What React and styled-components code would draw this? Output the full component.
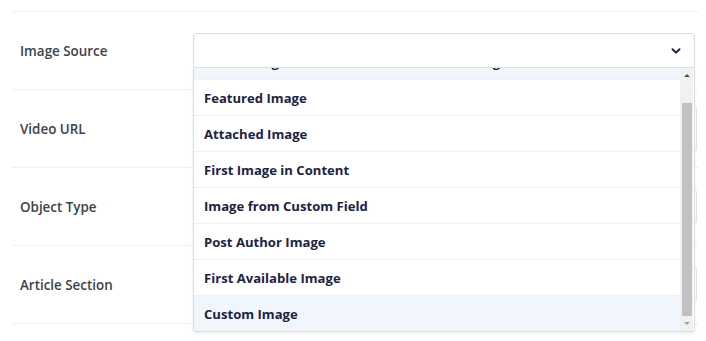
import React from "react";
import styled, { createGlobalStyle } from "styled-components";

const GlobalStyle = createGlobalStyle`
  body {
    margin: 0;
    background: #fff;
    font-family: "Open Sans", "Liberation Sans", sans-serif;
  }
`;

const Page = styled.div`
  padding: 11px 8px 0 12px;
  width: 706px;
  height: 341px;
  box-sizing: border-box;
  overflow: hidden;
`;

const Table = styled.div`
  border-top: 1px solid #f0f0f1;
`;

const Row = styled.div`
  display: grid;
  grid-template-columns: 181px 502px;
  align-items: center;
  height: 77px;
  border-bottom: 1px solid #f0f0f1;
`;

const Label = styled.div`
  padding-left: 8px;
  font-size: 13.4px;
  font-weight: 600;
  color: #3c434a;
`;

const Field = styled.div`
  position: relative;
`;

const Select = styled.div`
  display: flex;
  align-items: center;
  justify-content: flex-end;
  height: 35px;
  box-sizing: border-box;
  padding-right: 13px;
  border: 1px solid #dcdcde;
  border-radius: 3px 3px 0 0;
  background: #fff;

  & svg {
    width: 10px;
    height: 10px;
  }
`;

const Input = styled.div`
  height: ${(p) => p.$h}px;
  margin-right: -2px;
  box-sizing: border-box;
  border: 1px solid #e6e6e8;
  border-radius: 3px;
`;

const Dropdown = styled.div`
  position: absolute;
  top: calc(100% - 1px);
  left: 0;
  right: 0;
  z-index: 5;
  display: flex;
  height: 265px;
  box-sizing: border-box;
  border: 1px solid #dcdcde;
  border-radius: 0 0 3px 3px;
  background: #fff;
  box-shadow: 0 2px 4px rgba(0, 0, 0, 0.06);
  overflow: hidden;
`;

const List = styled.div`
  flex: 1;
  overflow: hidden;
`;

const Items = styled.div`
  margin-top: -24px;
`;

const Item = styled.div`
  display: flex;
  align-items: center;
  height: 35px;
  padding-left: 10px;
  border-bottom: 1px solid #f0f0f1;
  background: ${(p) => (p.$active ? "#f0f6fc" : "#fff")};
  font-size: 13.1px;
  font-weight: 700;
  color: #1d2340;
  white-space: nowrap;

  &:last-child {
    border-bottom: none;
  }
`;

const Scrollbar = styled.div`
  display: flex;
  flex-direction: column;
  align-items: center;
  width: 13px;
  margin-right: 1px;
  background: #f1f1f1;
`;

const Arrow = styled.div`
  display: flex;
  align-items: ${(p) => (p.$down ? "center" : "flex-start")};
  justify-content: center;
  height: ${(p) => p.$h}px;
  padding-top: ${(p) => (p.$down ? 0 : 6)}px;
  box-sizing: border-box;

  &::before {
    content: "";
    border-left: 3px solid transparent;
    border-right: 3px solid transparent;
    ${(p) =>
      p.$down
        ? "border-top: 3px solid #a3a3a3;"
        : "border-bottom: 3px solid #505050;"}
  }
`;

const Thumb = styled.div`
  width: 10px;
  height: 213px;
  background: #c1c1c1;
`;

const options = [
  { text: "Select Image Source — default Featured Image", active: true },
  { text: "Featured Image" },
  { text: "Attached Image" },
  { text: "First Image in Content" },
  { text: "Image from Custom Field" },
  { text: "Post Author Image" },
  { text: "First Available Image" },
  { text: "Custom Image", active: true },
];

function Chevron() {
  return (
    <svg viewBox="0 0 10 10">
      <path
        d="M1.5 3.2 L5 6.6 L8.5 3.2"
        fill="none"
        stroke="#1d2340"
        strokeWidth="2"
        strokeLinecap="round"
        strokeLinejoin="round"
      />
    </svg>
  );
}

export default function App() {
  return (
    <Page>
      <GlobalStyle />
      <Table>
        <Row>
          <Label>Image Source</Label>
          <Field>
            <Select>
              <Chevron />
            </Select>
            <Dropdown>
              <List>
                <Items>
                  {options.map((o) => (
                    <Item key={o.text} $active={o.active}>
                      {o.text}
                    </Item>
                  ))}
                </Items>
              </List>
              <Scrollbar>
                <Arrow $h={35} />
                <Thumb />
                <Arrow $h={15} $down />
              </Scrollbar>
            </Dropdown>
          </Field>
        </Row>
        <Row>
          <Label>Video URL</Label>
          <Field>
            <Input $h={46} />
          </Field>
        </Row>
        <Row>
          <Label>Object Type</Label>
          <Field>
            <Input $h={35} />
          </Field>
        </Row>
        <Row>
          <Label>Article Section</Label>
          <Field>
            <Input $h={35} />
          </Field>
        </Row>
      </Table>
    </Page>
  );
}
